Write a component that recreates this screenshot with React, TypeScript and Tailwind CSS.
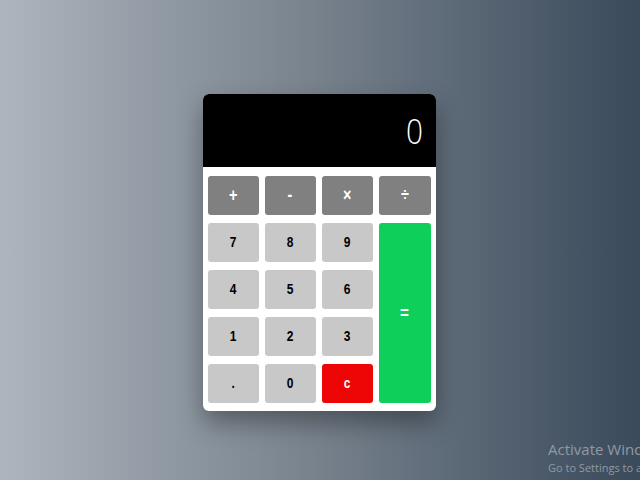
import React from "react";

const ops = ["+", "-", "×", "÷"];
const digits = ["7", "8", "9", "4", "5", "6", "1", "2", "3", ".", "0"];

// the reference uses a condensed bold face; squeeze Liberation Sans to match
function Label({ children }: { children: React.ReactNode }) {
  return <span className="inline-block scale-x-[0.8]">{children}</span>;
}

export default function App() {
  return (
    <div className="relative w-[640px] h-[480px] overflow-hidden flex items-start justify-center pt-[94px] bg-gradient-to-r from-[#adb5bd] via-[#77818c] to-[#3a4a5b]">
      <div className="w-[233px] -ml-[2px] rounded-[6px] bg-white shadow-[0_12px_24px_rgba(0,0,0,0.35)] overflow-hidden">
        {/* display */}
        <div
          className="h-[73px] bg-black text-white text-[35px] font-light flex items-center justify-end pr-[13px] pt-[2px]"
          style={{ fontFamily: '"Open Sans", "Liberation Sans", sans-serif' }}
        >
          <span className="inline-block scale-x-[0.85] origin-right">0</span>
        </div>

        {/* keys */}
        <div
          className="grid grid-cols-4 grid-rows-5 gap-x-[6px] gap-y-[8px] px-[5px] pt-[9px] pb-[8px] text-[15px] font-bold"
          style={{ fontFamily: '"Liberation Sans Narrow", "Liberation Sans", sans-serif' }}
        >
          {ops.map((o) => (
            <button key={o} className="h-[39px] rounded-[3px] bg-[#808080] text-white text-[18px]">
              <Label>{o}</Label>
            </button>
          ))}
          {digits.slice(0, 3).map((d) => (
            <button key={d} className="h-[39px] rounded-[3px] bg-[#c8c8c8] text-black">
              <Label>{d}</Label>
            </button>
          ))}
          <button className="row-span-4 rounded-[3px] bg-[#0dcf5a] text-white text-[19px]">
            <Label>=</Label>
          </button>
          {digits.slice(3).map((d) => (
            <button key={d} className="h-[39px] rounded-[3px] bg-[#c8c8c8] text-black">
              <Label>{d}</Label>
            </button>
          ))}
          <button className="h-[39px] rounded-[3px] bg-[#ee0505] text-white">
            <Label>c</Label>
          </button>
        </div>
      </div>

      {/* windows watermark */}
      <div
        className="absolute left-[548px] top-[440px] whitespace-nowrap text-[#8f99a4] leading-tight"
        style={{ fontFamily: '"Open Sans", "Liberation Sans", sans-serif' }}
      >
        <div className="text-[15px]">Activate Windows</div>
        <div className="text-[11px] mt-[2px]">Go to Settings to activate Windows.</div>
      </div>
    </div>
  );
}
